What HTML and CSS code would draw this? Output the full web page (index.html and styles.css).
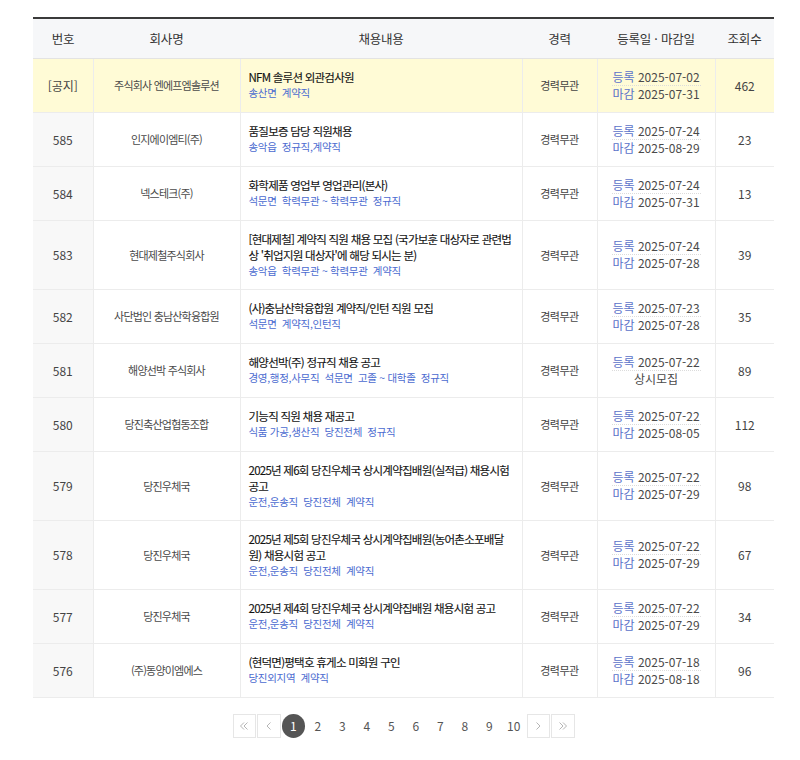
FILE: index.html
```html
<!DOCTYPE html>
<html lang="ko">
<head>
<meta charset="utf-8">
<link rel="stylesheet" href="styles.css">
</head>
<body>
<div class="wrap">
<table class="board">
<colgroup><col class="c-no"><col class="c-co"><col class="c-ti"><col class="c-ex"><col class="c-dt"><col class="c-hit"></colgroup>
<thead>
<tr><th>번호</th><th>회사명</th><th>채용내용</th><th>경력</th><th>등록일 · 마감일</th><th>조회수</th></tr>
</thead>
<tbody>
<tr class="notice">
<td class="no">[공지]</td><td class="co">주식회사 엔에프엠솔루션</td>
<td class="ti"><div class="tt">NFM 솔루션 외관검사원</div><div class="meta">송산면 &nbsp;계약직</div></td>
<td class="ex">경력무관</td>
<td class="dt"><div class="d1"><span class="lb">등록</span> 2025-07-02</div><div class="d2"><span class="lb">마감</span> 2025-07-31</div></td>
<td class="hit">462</td>
</tr>
<tr>
<td class="no">585</td><td class="co">인지에이엠티(주)</td>
<td class="ti"><div class="tt">품질보증 담당 직원채용</div><div class="meta">송악읍 &nbsp;정규직,계약직</div></td>
<td class="ex">경력무관</td>
<td class="dt"><div class="d1"><span class="lb">등록</span> 2025-07-24</div><div class="d2"><span class="lb">마감</span> 2025-08-29</div></td>
<td class="hit">23</td>
</tr>
<tr>
<td class="no">584</td><td class="co">넥스테크(주)</td>
<td class="ti"><div class="tt">화학제품 영업부 영업관리(본사)</div><div class="meta">석문면 &nbsp;학력무관 ~ 학력무관 &nbsp;정규직</div></td>
<td class="ex">경력무관</td>
<td class="dt"><div class="d1"><span class="lb">등록</span> 2025-07-24</div><div class="d2"><span class="lb">마감</span> 2025-07-31</div></td>
<td class="hit">13</td>
</tr>
<tr>
<td class="no">583</td><td class="co">현대제철주식회사</td>
<td class="ti"><div class="tt">[현대제철] 계약직 직원 채용 모집 (국가보훈 대상자로 관련법상 '취업지원 대상자'에 해당 되시는 분)</div><div class="meta">송악읍 &nbsp;학력무관 ~ 학력무관 &nbsp;계약직</div></td>
<td class="ex">경력무관</td>
<td class="dt"><div class="d1"><span class="lb">등록</span> 2025-07-24</div><div class="d2"><span class="lb">마감</span> 2025-07-28</div></td>
<td class="hit">39</td>
</tr>
<tr>
<td class="no">582</td><td class="co">사단법인 충남산학융합원</td>
<td class="ti"><div class="tt">(사)충남산학융합원 계약직/인턴 직원 모집</div><div class="meta">석문면 &nbsp;계약직,인턴직</div></td>
<td class="ex">경력무관</td>
<td class="dt"><div class="d1"><span class="lb">등록</span> 2025-07-23</div><div class="d2"><span class="lb">마감</span> 2025-07-28</div></td>
<td class="hit">35</td>
</tr>
<tr>
<td class="no">581</td><td class="co">해양선박 주식회사</td>
<td class="ti"><div class="tt">해양선박(주) 정규직 채용 공고</div><div class="meta">경영,행정,사무직 &nbsp;석문면 &nbsp;고졸 ~ 대학졸 &nbsp;정규직</div></td>
<td class="ex">경력무관</td>
<td class="dt"><div class="d1"><span class="lb">등록</span> 2025-07-22</div><div class="d2">상시모집</div></td>
<td class="hit">89</td>
</tr>
<tr>
<td class="no">580</td><td class="co">당진축산업협동조합</td>
<td class="ti"><div class="tt">기능직 직원 채용 재공고</div><div class="meta">식품 가공,생산직 &nbsp;당진전체 &nbsp;정규직</div></td>
<td class="ex">경력무관</td>
<td class="dt"><div class="d1"><span class="lb">등록</span> 2025-07-22</div><div class="d2"><span class="lb">마감</span> 2025-08-05</div></td>
<td class="hit">112</td>
</tr>
<tr>
<td class="no">579</td><td class="co">당진우체국</td>
<td class="ti"><div class="tt">2025년 제6회 당진우체국 상시계약집배원(실적급) 채용시험 공고</div><div class="meta">운전,운송직 &nbsp;당진전체 &nbsp;계약직</div></td>
<td class="ex">경력무관</td>
<td class="dt"><div class="d1"><span class="lb">등록</span> 2025-07-22</div><div class="d2"><span class="lb">마감</span> 2025-07-29</div></td>
<td class="hit">98</td>
</tr>
<tr>
<td class="no">578</td><td class="co">당진우체국</td>
<td class="ti"><div class="tt">2025년 제5회 당진우체국 상시계약집배원(농어촌소포배달원) 채용시험 공고</div><div class="meta">운전,운송직 &nbsp;당진전체 &nbsp;계약직</div></td>
<td class="ex">경력무관</td>
<td class="dt"><div class="d1"><span class="lb">등록</span> 2025-07-22</div><div class="d2"><span class="lb">마감</span> 2025-07-29</div></td>
<td class="hit">67</td>
</tr>
<tr>
<td class="no">577</td><td class="co">당진우체국</td>
<td class="ti"><div class="tt">2025년 제4회 당진우체국 상시계약집배원 채용시험 공고</div><div class="meta">운전,운송직 &nbsp;당진전체 &nbsp;계약직</div></td>
<td class="ex">경력무관</td>
<td class="dt"><div class="d1"><span class="lb">등록</span> 2025-07-22</div><div class="d2"><span class="lb">마감</span> 2025-07-29</div></td>
<td class="hit">34</td>
</tr>
<tr>
<td class="no">576</td><td class="co">(주)동양이엠에스</td>
<td class="ti"><div class="tt">(현덕면)평택호 휴게소 미화원 구인</div><div class="meta">당진외지역 &nbsp;계약직</div></td>
<td class="ex">경력무관</td>
<td class="dt"><div class="d1"><span class="lb">등록</span> 2025-07-18</div><div class="d2"><span class="lb">마감</span> 2025-08-18</div></td>
<td class="hit">96</td>
</tr>
</tbody>
</table>
<nav class="pager">
<a class="pbox"><svg width="10" height="10" viewBox="0 0 10 10"><path d="M5 1.5 1.5 5 5 8.5M8.5 1.5 5 5 8.5 8.5" fill="none" stroke="#b5b5b5" stroke-width="1"/></svg></a>
<a class="pbox"><svg width="10" height="10" viewBox="0 0 10 10"><path d="M6.5 1.5 3 5 6.5 8.5" fill="none" stroke="#b5b5b5" stroke-width="1"/></svg></a>
<a class="pnum on">1</a><a class="pnum">2</a><a class="pnum">3</a><a class="pnum">4</a><a class="pnum">5</a><a class="pnum">6</a><a class="pnum">7</a><a class="pnum">8</a><a class="pnum">9</a><a class="pnum">10</a>
<a class="pbox"><svg width="10" height="10" viewBox="0 0 10 10"><path d="M3.5 1.5 7 5 3.5 8.5" fill="none" stroke="#b5b5b5" stroke-width="1"/></svg></a>
<a class="pbox"><svg width="10" height="10" viewBox="0 0 10 10"><path d="M1.5 1.5 5 5 1.5 8.5M5 1.5 8.5 5 5 8.5" fill="none" stroke="#b5b5b5" stroke-width="1"/></svg></a>
</nav>
</div>
</body>
</html>
```
FILE: styles.css
```css
* { box-sizing: border-box; }
body { margin: 0; background: #fff; font-family: "Noto Sans CJK KR", "Noto Sans", sans-serif; color: #333; }
.wrap { padding: 17px 26px 0 33px; }
.board { width: 741px; border-collapse: collapse; table-layout: fixed; border-top: 2px solid #3a3a3a; }
.c-no { width: 60px; } .c-co { width: 147px; } .c-ti { width: 282px; } .c-ex { width: 75px; } .c-dt { width: 118px; } .c-hit { width: 59px; }
.board th { height: 40px; background: #f6f7f9; font-weight: 400; font-size: 12.5px; color: #333; border-bottom: 1px solid #e3e3e3; padding: 0; letter-spacing: -0.2px; }
.board td { border-bottom: 1px solid #ececec; border-left: 1px solid #ececec; text-align: center; font-size: 11px; color: #444; padding: 10px 8px; }
.board td:first-child { border-left: 0; background: #f8f8f8; font-size: 12px; }
.board tr.notice td { background: #fffbd6; }
.board td.co { letter-spacing: -0.8px; color: #4a4a4a; }
.board td.ex { letter-spacing: -0.5px; }
.board td.ti { text-align: left; padding-right: 7.5px; }
.tt { font-size: 11.5px; font-weight: 400; color: #111; line-height: 16px; letter-spacing: -0.75px; -webkit-text-stroke: 0.12px #111; }
.meta { font-size: 10.5px; color: #4b6bd0; line-height: 16px; letter-spacing: -0.3px; }
.board td.dt { padding: 10px 14px; font-size: 12px; color: #4a4a4a; }
.d1, .d2 { line-height: 16px; }
.d1 { border-bottom: 1px dotted #dcdcdc; }
.lb { color: #5b72c9; }
.board td.hit { font-size: 12px; }
.pager { display: flex; justify-content: center; align-items: center; gap: 1px; margin-top: 16px; }
.pager a { display: flex; align-items: center; justify-content: center; width: 23.5px; height: 24px; font-size: 12px; color: #555; }
.pager .pbox { border: 1px solid #e6e6e6; }
.pager .on { background: #555; color: #fff; border-radius: 50%; }
```
